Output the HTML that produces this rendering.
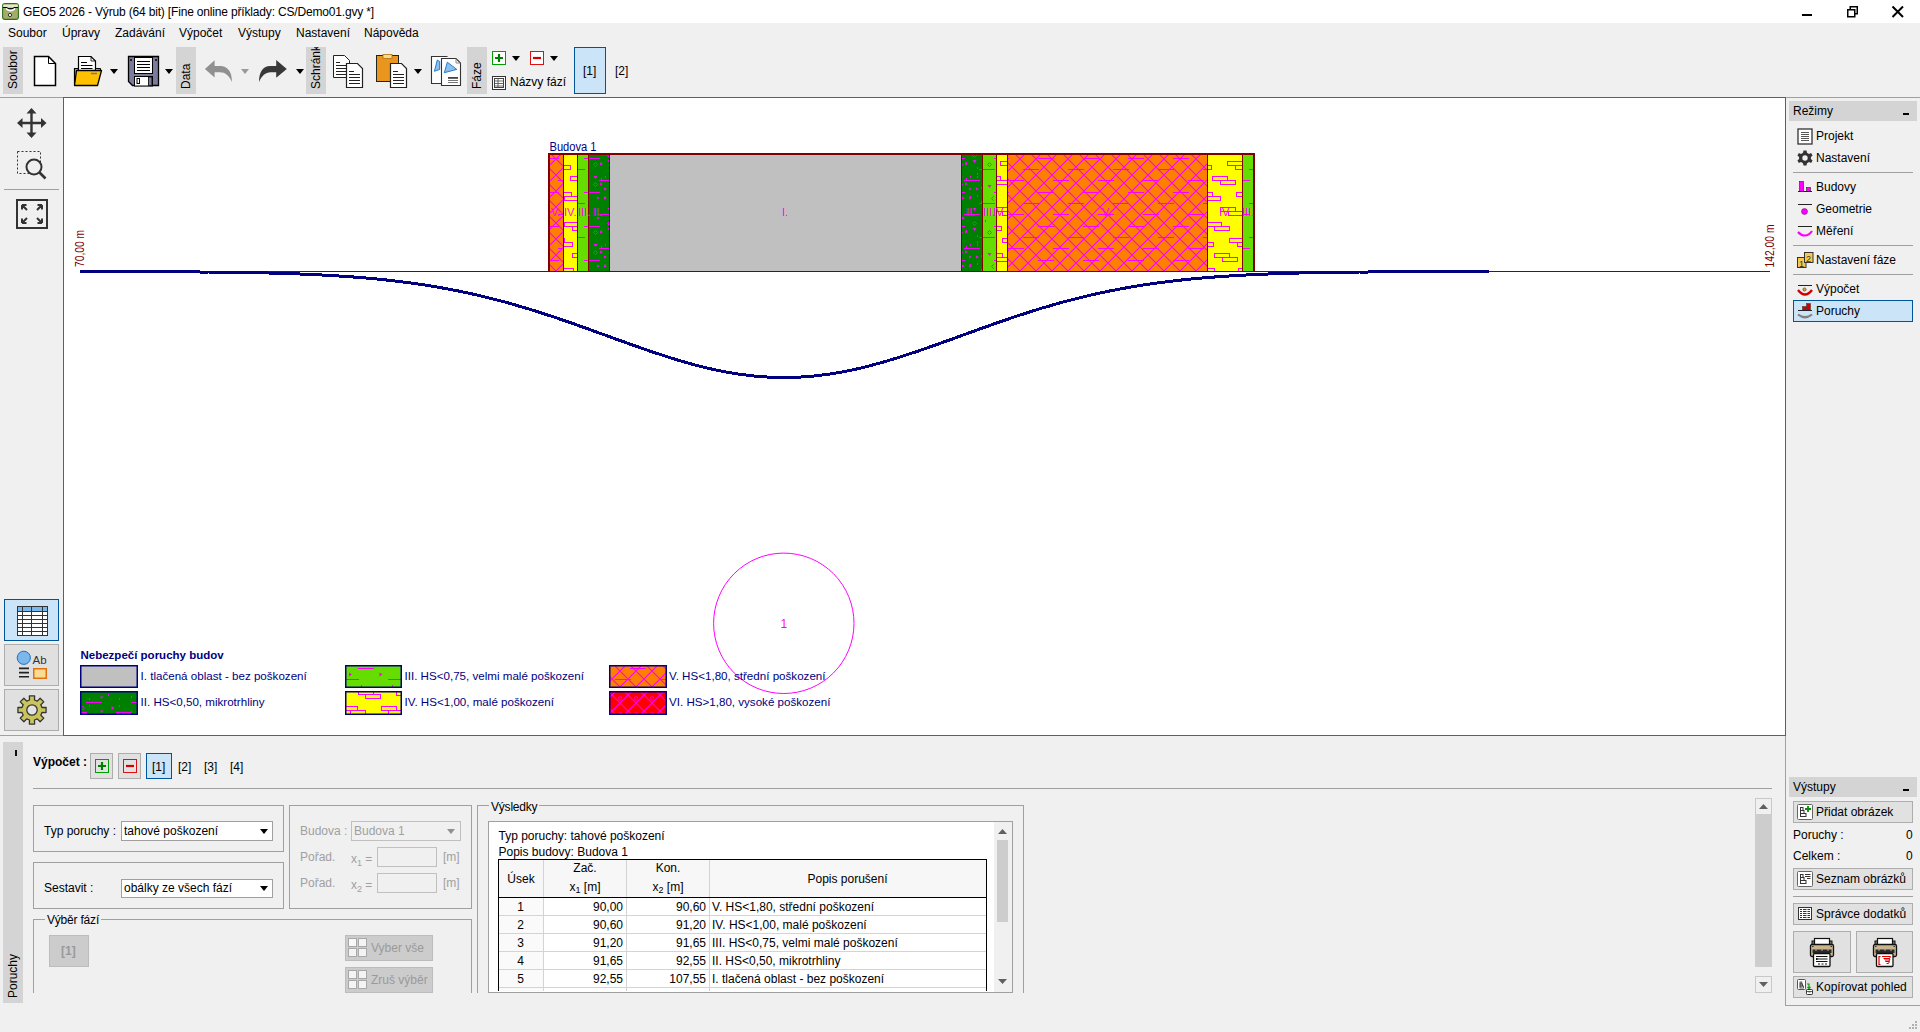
<!DOCTYPE html>
<html><head><meta charset="utf-8">
<style>
*{margin:0;padding:0;box-sizing:border-box}
html,body{width:1920px;height:1032px;overflow:hidden;background:#f0f0f0;font-family:"Liberation Sans",sans-serif;font-size:12px;color:#000}
.a{position:absolute}
.t{position:absolute;white-space:nowrap;line-height:12px;font-size:12px}
.tab{position:absolute;background:#d4d4d4}
.vt{position:absolute;white-space:nowrap;font-size:12px;line-height:12px;transform-origin:0 0;transform:rotate(-90deg)}
.hdr{position:absolute;background:#d4d4d4}
.btn{position:absolute;background:#e1e1e1;border:1px solid #adadad}
.sel{position:absolute;background:#cce4f7;border:1px solid #005499}
.sep{position:absolute;background:#a0a0a0;height:1px}
.grp{position:absolute;border:1px solid #a0a0a0}
</style></head><body>
<!-- title bar -->
<div class="a" style="left:0;top:0;width:1920px;height:23px;background:#fff"></div>
<svg class="a" style="left:2px;top:3px" width="17" height="17" viewBox="0 0 17 17"><rect x="0.6" y="0.6" width="15.8" height="15.8" rx="2.5" fill="#a4ac6a" stroke="#2f7020" stroke-width="1.1"/><path d="M1.2 1.5 H15.8 V4.5 H1.2 Z" fill="#e4e8d0"/><path d="M4 5.5 Q8.5 10 13 5.5" fill="none" stroke="#fff" stroke-width="1.6"/><path d="M1 4.5 H5 Q5.8 5.6 7 5.6 H10 Q11.2 5.6 12 4.5 H16" fill="none" stroke="#000" stroke-width="1"/><circle cx="8" cy="12" r="1.6" fill="#fff" stroke="#222" stroke-width="0.9"/></svg>
<div class="t" style="left:23px;top:6px;letter-spacing:-0.17px">GEO5 2026 - Výrub (64 bit) [Fine online příklady: CS/Demo01.gvy *]</div>
<!-- window controls -->
<div class="a" style="left:1802px;top:14px;width:10px;height:2px;background:#000"></div>
<svg class="a" style="left:1846px;top:5px" width="13" height="13" viewBox="0 0 13 13"><rect x="1.75" y="4.75" width="7" height="7" fill="none" stroke="#000" stroke-width="1.5"/><path d="M4.25 4.5 V1.75 H11.25 V8.75 H9" fill="none" stroke="#000" stroke-width="1.5"/></svg>
<svg class="a" style="left:1891px;top:5px" width="14" height="14" viewBox="0 0 14 14"><path d="M1.5 1.5 L12 12 M12 1.5 L1.5 12" stroke="#000" stroke-width="2"/></svg>
<!-- menu -->
<div class="t" style="left:8px;top:27px">Soubor</div>
<div class="t" style="left:62px;top:27px">Úpravy</div>
<div class="t" style="left:115px;top:27px">Zadávání</div>
<div class="t" style="left:179px;top:27px">Výpočet</div>
<div class="t" style="left:238px;top:27px">Výstupy</div>
<div class="t" style="left:296px;top:27px">Nastavení</div>
<div class="t" style="left:364px;top:27px">Nápověda</div>
<!-- toolbar tabs -->
<div class="tab" style="left:3px;top:47px;width:20px;height:47px"></div>
<div class="vt" style="left:7px;top:89px">Soubor</div>
<div class="tab" style="left:176px;top:47px;width:20px;height:47px"></div>
<div class="vt" style="left:180px;top:89px">Data</div>
<div class="tab" style="left:306px;top:47px;width:20px;height:47px;overflow:hidden"></div>
<div class="a" style="left:306px;top:47px;width:20px;height:47px;overflow:hidden"><div class="vt" style="left:4px;top:42px">Schránka</div></div>
<div class="tab" style="left:467px;top:47px;width:20px;height:47px"></div>
<div class="vt" style="left:471px;top:89px">Fáze</div>
<!-- new -->
<svg class="a" style="left:33px;top:55px" width="26" height="33" viewBox="0 0 26 33"><path d="M1.5 1.5 H15.5 L22.5 8.5 V30.5 H1.5 Z" fill="#fff" stroke="#000" stroke-width="1.5"/><path d="M15.5 1.5 V8.5 H22.5" fill="none" stroke="#000" stroke-width="1"/></svg>
<!-- open -->
<svg class="a" style="left:73px;top:55px" width="30" height="33" viewBox="0 0 30 33"><path d="M1.5 13.5 H6.5 V29 H1.5 Z" fill="#e0a000" stroke="#000" stroke-width="1.2"/><path d="M5.5 1.5 H18 L22.5 6 V19 H5.5 Z" fill="#fff" stroke="#000" stroke-width="1.2"/><path d="M18 1.5 V6 H22.5" fill="none" stroke="#000" stroke-width=".8"/><path d="M8 7.5 H14 M8 10.5 H19.5 M8 13.5 H19.5" stroke="#000" stroke-width="1"/><path d="M22 13.5 H27.5 V16" fill="#e0a000" stroke="#000" stroke-width="1"/><path d="M3.5 15.5 H28.5 L24.5 30.5 H1.5 Z" fill="#ffc000" stroke="#000" stroke-width="1.3" stroke-linejoin="round"/><path d="M18 18.5 H24" stroke="#6a78a8" stroke-width="1.5"/></svg>
<svg class="a" style="left:110px;top:69px" width="8" height="5"><path d="M0 0 H8 L4 5 Z" fill="#000"/></svg>
<!-- save -->
<svg class="a" style="left:127px;top:55px" width="33" height="33" viewBox="0 0 33 33"><path d="M1.5 1.5 H31.5 V30.5 H5.5 L1.5 26.5 Z" fill="#7b7b9b" stroke="#000" stroke-width="1.3"/><rect x="3" y="4" width="2" height="2" fill="#222"/><rect x="28" y="4" width="2" height="2" fill="#222"/><rect x="7.5" y="2.5" width="18" height="16" fill="#fff" stroke="#000" stroke-width="1"/><path d="M10 6.5 H23 M10 9.5 H23 M10 12.5 H23 M10 15.5 H23" stroke="#000" stroke-width="1"/><rect x="7.5" y="21.5" width="18" height="9.5" fill="#fff" stroke="#000" stroke-width="1"/><rect x="10" y="23.5" width="2.5" height="5" fill="none" stroke="#000" stroke-width="1"/><rect x="21.5" y="22" width="3.5" height="8.5" fill="#7b7b9b" stroke="#000" stroke-width=".8"/></svg>
<svg class="a" style="left:165px;top:69px" width="8" height="5"><path d="M0 0 H8 L4 5 Z" fill="#000"/></svg>
<!-- undo -->
<svg class="a" style="left:204px;top:58px" width="30" height="26" viewBox="204 58 30 26"><path d="M204.9 68.9 L214.6 60.3 V66 H220.5 C227 66 232 71 232 82 C229 75.5 225 72.3 220 72.3 H214.6 V77.5 Z" fill="#909090"/></svg>
<svg class="a" style="left:241px;top:69px" width="8" height="5"><path d="M0 0 H8 L4 5 Z" fill="#9a9a9a"/></svg>
<!-- redo -->
<svg class="a" style="left:258px;top:58px" width="30" height="26" viewBox="258 58 30 26"><path d="M286.8 69 L276.2 60 V66 H270 C263.5 66 259 71.5 259 82 C261.8 75.8 265.5 72.3 270.5 72.3 H276.2 V77.8 Z" fill="#383838"/></svg>
<svg class="a" style="left:296px;top:69px" width="8" height="5"><path d="M0 0 H8 L4 5 Z" fill="#000"/></svg>
<!-- copy -->
<svg class="a" style="left:332px;top:54px" width="33" height="35" viewBox="0 0 33 35"><path d="M1.5 1.5 H12.5 L17.5 6.5 V23.5 H1.5 Z" fill="#fff" stroke="#222" stroke-width="1"/><path d="M4 8.5 H8 M4 11.5 H14 M4 14.5 H14 M4 17.5 H14 M4 20.5 H14" stroke="#222"/><path d="M14.5 9.5 H25.5 L30.5 14.5 V33.5 H14.5 Z" fill="#fff" stroke="#222" stroke-width="1.2"/><path d="M17 17.5 H22 M17 20.5 H28 M17 23.5 H28 M17 26.5 H28 M17 29.5 H28" stroke="#222"/></svg>
<!-- paste -->
<svg class="a" style="left:375px;top:54px" width="34" height="35" viewBox="0 0 34 35"><rect x="1.5" y="1.5" width="22" height="26" fill="#e8961e" stroke="#222"/><rect x="8" y="0.5" width="9" height="4" fill="#f8d890" stroke="#b07010" stroke-width=".8"/><path d="M15.5 9.5 H26.5 L31.5 14.5 V33.5 H15.5 Z" fill="#fff" stroke="#222" stroke-width="1.2"/><path d="M18 17.5 H23 M18 20.5 H29 M18 23.5 H29 M18 26.5 H29 M18 29.5 H29" stroke="#222"/></svg>
<svg class="a" style="left:414px;top:69px" width="8" height="5"><path d="M0 0 H8 L4 5 Z" fill="#000"/></svg>
<!-- report icon -->
<svg class="a" style="left:430px;top:55px" width="33" height="33" viewBox="0 0 33 33"><path d="M1.5 1.5 H17.5 V28.5 H1.5 Z" fill="#fff"/><path d="M17.5 1.5 H1.5 V28.5 H11" fill="none" stroke="#333" stroke-width="1.1"/><path d="M7.3 5 L4.4 16.3 L9.7 14.5 V6.5 Z" fill="#8ac0ee" stroke="#1a70c8" stroke-width=".9"/><path d="M11.5 3.5 H26 L30.5 8 V30.5 H11.5 Z" fill="#fff" stroke="#333" stroke-width="1.1"/><path d="M26 3.5 V8 H30.5" fill="none" stroke="#888" stroke-width="1"/><path d="M17.3 7.2 L14.3 17.7 L26.8 14.4 Z" fill="#8ac0ee" stroke="#1a70c8" stroke-width=".9"/><path d="M18 22.9 H28" stroke="#444" stroke-width="1.8"/><path d="M18 25.5 H28 M18 27.5 H28" stroke="#555" stroke-width=".8"/></svg>
<!-- phase + - -->
<svg class="a" style="left:492px;top:51px" width="14" height="14" viewBox="0 0 14 14"><rect x="0.5" y="0.5" width="13" height="13" fill="#fff" stroke="#00a000"/><path d="M7 3 V11 M3 7 H11" stroke="#008000" stroke-width="2.2"/></svg>
<svg class="a" style="left:512px;top:56px" width="8" height="5"><path d="M0 0 H8 L4 5 Z" fill="#000"/></svg>
<svg class="a" style="left:530px;top:51px" width="14" height="14" viewBox="0 0 14 14"><rect x="0.5" y="0.5" width="13" height="13" fill="#fff" stroke="#e01010"/><path d="M3 7 H11" stroke="#d00000" stroke-width="2.2"/></svg>
<svg class="a" style="left:550px;top:56px" width="8" height="5"><path d="M0 0 H8 L4 5 Z" fill="#000"/></svg>
<svg class="a" style="left:492px;top:76px" width="14" height="14" viewBox="0 0 14 14"><rect x="0.5" y="0.5" width="13" height="13" fill="#fff" stroke="#333"/><rect x="2.5" y="2.5" width="9" height="9" fill="none" stroke="#444"/><path d="M2.5 5 H11.5 M2.5 7.5 H11.5 M2.5 10 H11.5 M6 2.5 V11.5" stroke="#444" stroke-width=".8"/></svg>
<div class="t" style="left:510px;top:76px">Názvy fází</div>
<div class="sel" style="left:574px;top:47px;width:32px;height:47px"></div>
<div class="t" style="left:583px;top:65px">[1]</div>
<div class="t" style="left:615px;top:65px">[2]</div>
<!-- CANVAS -->
<div class="a" style="left:63px;top:97px;width:1723px;height:639px;border:1px solid #0078d7;background:#fff"></div>
<div class="a" style="left:0;top:97px;width:63px;height:1px;background:#a0a0a0"></div>
<div class="a" style="left:1786px;top:97px;width:134px;height:1px;background:#a0a0a0"></div>
<div class="a" style="left:0;top:735px;width:63px;height:1px;background:#a0a0a0"></div>
<div class="a" style="left:1785px;top:736px;width:1px;height:270px;background:#a0a0a0"></div>
<div class="a" style="left:1785px;top:1005px;width:135px;height:1px;background:#a0a0a0"></div>
<!-- CANVAS SVG -->
<svg class="a" style="left:64px;top:98px" width="1721" height="637" viewBox="64 98 1721 637">
<defs>
<pattern id="pV" width="16" height="16" patternUnits="userSpaceOnUse" x="4" y="7"><rect width="16" height="16" fill="#ff8000"/><path d="M0 0 L16 16 M16 0 L0 16" stroke="#ff00ff" stroke-width="1.1"/></pattern>
<pattern id="pVd" width="45" height="34" patternUnits="userSpaceOnUse" x="3" y="22"><path d="M0 0.5 H16 M30 11.5 H46 M-15 11.5 H1 M15 22.5 H31" stroke="#ff00ff" stroke-width="1"/></pattern>
<pattern id="pDl" width="45" height="34" patternUnits="userSpaceOnUse" x="44" y="22"><path d="M0 0.5 H16 M30 11.5 H46 M-15 11.5 H1 M15 22.5 H31" stroke="#ff00ff" stroke-width="1"/></pattern>
<pattern id="pDr" width="45" height="34" patternUnits="userSpaceOnUse" x="4" y="22"><path d="M0 0.5 H16 M30 11.5 H46 M-15 11.5 H1 M15 22.5 H31" stroke="#ff00ff" stroke-width="1"/></pattern>
<g id="marks"><rect x="17" y="4" width="1" height="2" fill="#ff00ff"/><rect x="28" y="9" width="1" height="2" fill="#ff00ff"/><rect x="28" y="15" width="1" height="2" fill="#ff00ff"/><rect x="21" y="18" width="1" height="2" fill="#ff00ff"/><rect x="21" y="38" width="1" height="2" fill="#ff00ff"/><rect x="32" y="29" width="1" height="2" fill="#ff00ff"/><rect x="32" y="43" width="1" height="2" fill="#ff00ff"/><rect x="17" y="20" width="1" height="2" fill="#ff00ff"/><rect x="28" y="37" width="1" height="2" fill="#ff00ff"/><rect x="36" y="62" width="1" height="2" fill="#ff00ff"/><rect x="28" y="18" width="1" height="2" fill="#ff00ff"/><path d="M20 29.5 L23 31 L20 32.5 Z" fill="#ff00ff"/><path d="M13 38.5 L16 40 L13 41.5 Z" fill="#ff00ff"/><path d="M13 58.5 L16 60 L13 61.5 Z" fill="#ff00ff"/><path d="M16 4.5 L19 6 L16 7.5 Z" fill="#ff00ff"/><path d="M16 24.5 L19 26 L16 27.5 Z" fill="#ff00ff"/><path d="M27 29.5 L30 31 L27 32.5 Z" fill="#ff00ff"/><path d="M20 38.5 L23 40 L20 41.5 Z" fill="#ff00ff"/><path d="M23.5 50 H27.5 L25.5 53 Z" fill="#ff00ff"/><path d="M23.5 2 H27.5 L25.5 5 Z" fill="#ff00ff"/><path d="M38.5 27 H42.5 L40.5 30 Z" fill="#ff00ff"/><path d="M9.5 18 H13.5 L11.5 21 Z" fill="#ff00ff"/><path d="M25.5 63.5 L27.5 65.5 L25.5 67.5 L23.5 65.5 Z" fill="none" stroke="#ff00ff" stroke-width="1"/><path d="M40.5 4.5 L42.5 6.5 L40.5 8.5 L38.5 6.5 Z" fill="none" stroke="#ff00ff" stroke-width="1"/><path d="M44.5 38.5 L46.5 40.5 L44.5 42.5 L42.5 40.5 Z" fill="none" stroke="#ff00ff" stroke-width="1"/><path d="M11.5 4.5 L13.5 6.5 L11.5 8.5 L9.5 6.5 Z" fill="none" stroke="#ff00ff" stroke-width="1"/><path d="M11.5 24.5 L13.5 26.5 L11.5 28.5 L9.5 26.5 Z" fill="none" stroke="#ff00ff" stroke-width="1"/></g>
<pattern id="pMl" width="45" height="68" patternUnits="userSpaceOnUse" x="44" y="22"><use href="#marks"/></pattern>
<pattern id="pMr" width="45" height="68" patternUnits="userSpaceOnUse" x="4" y="22"><use href="#marks"/></pattern>
<pattern id="pVI" width="16" height="16" patternUnits="userSpaceOnUse" x="4" y="7"><rect width="16" height="16" fill="#ff0000"/><path d="M0 0 L16 16 M16 0 L0 16" stroke="#ff00ff" stroke-width="1.1"/><circle cx="8" cy="3.5" r="1.8" fill="none" stroke="#ff00ff" stroke-width=".9"/></pattern>
<pattern id="pIV" width="38.5" height="32" patternUnits="userSpaceOnUse" x="12" y="3"><g fill="none" stroke="#ff00ff" stroke-width="1"><path d="M0.5 0.5 h15 v4 h-15 z M8.5 4.5 h15 v4 h-15 z M24.5 16.5 h15 v4 h-15 z M-14 16.5 h15 v4 h-15 z M32.5 20.5 h15 v4 h-15 z M-6 20.5 h15 v4 h-15 z"/></g></pattern>
<pattern id="pIII" width="45" height="34" patternUnits="userSpaceOnUse" x="1" y="3"><path d="M0 0.5 H16 M30 11.5 H46 M-15 11.5 H1 M15 22.5 H31" stroke="#ff00ff" stroke-width="1"/><path d="M3 5 L6 6.5 L3 8 Z M34 5 L37 6.5 L34 8 Z" fill="#ff00ff"/></pattern>
<pattern id="pII" width="45" height="34" patternUnits="userSpaceOnUse" x="6" y="11"><path d="M0 0.5 H16 M30 11.5 H46 M-15 11.5 H1 M15 22.5 H31" stroke="#ff00ff" stroke-width="1"/><path d="M19 -5 L22 -5 L20.5 -3 Z M19 9 L22 9 L20.5 11 Z M27 3 L30 4.5 L27 6 Z" fill="#ff00ff"/><path d="M4 -4 V-2 M4 3 V5 M27 -7 V-5 M38 -4 V-2 M38 3 V5" stroke="#ff00ff"/></pattern>
</defs>
<g shape-rendering="crispEdges">
<rect x="80" y="271" width="1690" height="1" fill="#800000"/>
<!-- building -->
<rect x="548" y="153" width="707" height="119" fill="#800000"/>
<rect x="550" y="155" width="13" height="116" fill="url(#pV)"/><rect x="550" y="155" width="13" height="116" fill="url(#pVd)"/>
<svg x="564" y="155" width="13" height="116" viewBox="564 155 13 116"><rect x="564" y="155" width="13" height="116" fill="#ffff00"/><path d="M538.5 130.5 h15 v4 h-15 z M546.5 134.5 h15 v4 h-15 z M577.5 130.5 h15 v4 h-15 z M585.5 134.5 h15 v4 h-15 z M562.5 146.5 h15 v4 h-15 z M570.5 150.5 h15 v4 h-15 z M547.5 161.5 h15 v4 h-15 z M555.5 165.5 h15 v4 h-15 z M570.5 176.5 h15 v4 h-15 z M578.5 180.5 h15 v4 h-15 z M556.5 192.5 h15 v4 h-15 z M564.5 196.5 h15 v4 h-15 z M540.5 207.5 h15 v4 h-15 z M548.5 211.5 h15 v4 h-15 z M579.5 207.5 h15 v4 h-15 z M587.5 211.5 h15 v4 h-15 z M564.5 222.5 h15 v4 h-15 z M572.5 226.5 h15 v4 h-15 z M549.5 238.5 h15 v4 h-15 z M557.5 242.5 h15 v4 h-15 z M572.5 253.5 h15 v4 h-15 z M580.5 257.5 h15 v4 h-15 z M558.5 268.5 h15 v4 h-15 z M566.5 272.5 h15 v4 h-15 z M542.5 284.5 h15 v4 h-15 z M550.5 288.5 h15 v4 h-15 z" fill="none" stroke="#ff00ff" stroke-width="1"/></svg>
<rect x="578" y="155" width="10" height="116" fill="#66dd00"/><rect x="578" y="155" width="10" height="116" fill="url(#pDl)"/>
<rect x="589" y="155" width="20" height="116" fill="#008000"/><rect x="589" y="155" width="20" height="116" fill="url(#pDl)"/><rect x="589" y="155" width="20" height="116" fill="url(#pMl)"/>
<rect x="610" y="155" width="351" height="116" fill="#c0c0c0"/>
<rect x="962" y="155" width="20" height="116" fill="#008000"/><rect x="962" y="155" width="20" height="116" fill="url(#pDr)"/><rect x="962" y="155" width="20" height="116" fill="url(#pMr)"/>
<rect x="983" y="155" width="13" height="116" fill="#66dd00"/><rect x="983" y="155" width="13" height="116" fill="url(#pDr)"/><rect x="983" y="155" width="13" height="116" fill="url(#pMr)"/>
<svg x="997" y="155" width="10" height="116" viewBox="997 155 10 116"><rect x="997" y="155" width="10" height="116" fill="#ffff00"/><path d="M992.5 130.5 h15 v4 h-15 z M1000.5 134.5 h15 v4 h-15 z M976.5 146.5 h15 v4 h-15 z M984.5 150.5 h15 v4 h-15 z M1000.5 161.5 h15 v4 h-15 z M1008.5 165.5 h15 v4 h-15 z M985.5 176.5 h15 v4 h-15 z M993.5 180.5 h15 v4 h-15 z M1008.5 192.5 h15 v4 h-15 z M1016.5 196.5 h15 v4 h-15 z M994.5 207.5 h15 v4 h-15 z M1002.5 211.5 h15 v4 h-15 z M978.5 222.5 h15 v4 h-15 z M986.5 226.5 h15 v4 h-15 z M1002.5 238.5 h15 v4 h-15 z M1010.5 242.5 h15 v4 h-15 z M987.5 253.5 h15 v4 h-15 z M995.5 257.5 h15 v4 h-15 z M972.5 268.5 h15 v4 h-15 z M980.5 272.5 h15 v4 h-15 z M1010.5 268.5 h15 v4 h-15 z M1018.5 272.5 h15 v4 h-15 z M996.5 284.5 h15 v4 h-15 z M1004.5 288.5 h15 v4 h-15 z" fill="none" stroke="#ff00ff" stroke-width="1"/></svg>
<rect x="1008" y="155" width="199" height="116" fill="url(#pV)"/><rect x="1008" y="155" width="199" height="116" fill="url(#pVd)"/>
<svg x="1208" y="155" width="34" height="116" viewBox="1208 155 34 116"><rect x="1208" y="155" width="34" height="116" fill="#ffff00"/><path d="M1218.5 130.5 h15 v4 h-15 z M1226.5 134.5 h15 v4 h-15 z M1204.5 146.5 h15 v4 h-15 z M1212.5 150.5 h15 v4 h-15 z M1242.5 146.5 h15 v4 h-15 z M1250.5 150.5 h15 v4 h-15 z M1188.5 161.5 h15 v4 h-15 z M1196.5 165.5 h15 v4 h-15 z M1227.5 161.5 h15 v4 h-15 z M1235.5 165.5 h15 v4 h-15 z M1212.5 176.5 h15 v4 h-15 z M1220.5 180.5 h15 v4 h-15 z M1197.5 192.5 h15 v4 h-15 z M1205.5 196.5 h15 v4 h-15 z M1236.5 192.5 h15 v4 h-15 z M1244.5 196.5 h15 v4 h-15 z M1182.5 207.5 h15 v4 h-15 z M1190.5 211.5 h15 v4 h-15 z M1220.5 207.5 h15 v4 h-15 z M1228.5 211.5 h15 v4 h-15 z M1206.5 222.5 h15 v4 h-15 z M1214.5 226.5 h15 v4 h-15 z M1244.5 222.5 h15 v4 h-15 z M1252.5 226.5 h15 v4 h-15 z M1190.5 238.5 h15 v4 h-15 z M1198.5 242.5 h15 v4 h-15 z M1229.5 238.5 h15 v4 h-15 z M1237.5 242.5 h15 v4 h-15 z M1214.5 253.5 h15 v4 h-15 z M1222.5 257.5 h15 v4 h-15 z M1199.5 268.5 h15 v4 h-15 z M1207.5 272.5 h15 v4 h-15 z M1238.5 268.5 h15 v4 h-15 z M1246.5 272.5 h15 v4 h-15 z M1184.5 284.5 h15 v4 h-15 z M1192.5 288.5 h15 v4 h-15 z M1222.5 284.5 h15 v4 h-15 z M1230.5 288.5 h15 v4 h-15 z" fill="none" stroke="#ff00ff" stroke-width="1"/></svg>
<rect x="1243" y="155" width="10" height="116" fill="#66dd00"/><rect x="1243" y="155" width="10" height="116" fill="url(#pDr)"/>
</g>
<g font-family="Liberation Sans" font-size="11" fill="#ff00ff">
<text x="551" y="215.5">V.</text><text x="564" y="215.5">IV.</text><text x="578" y="215.5">III.</text><text x="593" y="215.5">II.</text>
<text x="782" y="215.5">I.</text>
<text x="966" y="215.5">II.</text><text x="983" y="215.5">III.</text><text x="993" y="215.5">IV.</text>
<text x="1102" y="215.5">V.</text><text x="1219" y="215.5">IV.</text><text x="1242" y="215.5">III.</text>
</g>
<text x="549.5" y="151" font-family="Liberation Sans" font-size="12" fill="#000080" textLength="47" lengthAdjust="spacingAndGlyphs">Budova 1</text>
<text transform="translate(84,267) rotate(-90)" font-family="Liberation Sans" font-size="12" fill="#800000" textLength="37" lengthAdjust="spacingAndGlyphs">70,00 m</text>
<text transform="translate(1773.5,267.5) rotate(-90)" font-family="Liberation Sans" font-size="12" fill="#800000" textLength="43" lengthAdjust="spacingAndGlyphs">142,00 m</text>
<path d="M80,271.5 L84,271.5 L88,271.5 L92,271.6 L96,271.6 L100,271.6 L104,271.6 L108,271.6 L112,271.6 L116,271.6 L120,271.6 L124,271.6 L128,271.6 L132,271.6 L136,271.6 L140,271.6 L144,271.7 L148,271.7 L152,271.7 L156,271.7 L160,271.7 L164,271.7 L168,271.7 L172,271.8 L176,271.8 L180,271.8 L184,271.8 L188,271.9 L192,271.9 L196,271.9 L200,272.0 L204,272.0 L208,272.0 L212,272.1 L216,272.1 L220,272.2 L224,272.2 L228,272.3 L232,272.3 L236,272.4 L240,272.4 L244,272.5 L248,272.6 L252,272.7 L256,272.7 L260,272.8 L264,272.9 L268,273.0 L272,273.1 L276,273.2 L280,273.3 L284,273.5 L288,273.6 L292,273.7 L296,273.9 L300,274.0 L304,274.2 L308,274.4 L312,274.5 L316,274.7 L320,274.9 L324,275.1 L328,275.3 L332,275.6 L336,275.8 L340,276.1 L344,276.3 L348,276.6 L352,276.9 L356,277.2 L360,277.5 L364,277.8 L368,278.2 L372,278.6 L376,278.9 L380,279.3 L384,279.7 L388,280.2 L392,280.6 L396,281.1 L400,281.6 L404,282.1 L408,282.6 L412,283.1 L416,283.7 L420,284.3 L424,284.9 L428,285.5 L432,286.2 L436,286.8 L440,287.5 L444,288.3 L448,289.0 L452,289.8 L456,290.5 L460,291.3 L464,292.2 L468,293.0 L472,293.9 L476,294.8 L480,295.8 L484,296.7 L488,297.7 L492,298.7 L496,299.7 L500,300.8 L504,301.8 L508,302.9 L512,304.0 L516,305.2 L520,306.4 L524,307.5 L528,308.7 L532,310.0 L536,311.2 L540,312.5 L544,313.8 L548,315.1 L552,316.4 L556,317.7 L560,319.1 L564,320.5 L568,321.8 L572,323.2 L576,324.6 L580,326.1 L584,327.5 L588,328.9 L592,330.4 L596,331.8 L600,333.3 L604,334.7 L608,336.2 L612,337.6 L616,339.1 L620,340.5 L624,341.9 L628,343.4 L632,344.8 L636,346.2 L640,347.6 L644,349.0 L648,350.4 L652,351.8 L656,353.1 L660,354.4 L664,355.7 L668,357.0 L672,358.3 L676,359.5 L680,360.7 L684,361.9 L688,363.0 L692,364.1 L696,365.2 L700,366.2 L704,367.2 L708,368.2 L712,369.1 L716,370.0 L720,370.8 L724,371.6 L728,372.3 L732,373.0 L736,373.7 L740,374.3 L744,374.8 L748,375.3 L752,375.8 L756,376.2 L760,376.5 L764,376.8 L768,377.1 L772,377.3 L776,377.4 L780,377.5 L784,377.5 L788,377.5 L792,377.4 L796,377.3 L800,377.1 L804,376.8 L808,376.5 L812,376.2 L816,375.8 L820,375.3 L824,374.8 L828,374.3 L832,373.7 L836,373.0 L840,372.3 L844,371.6 L848,370.8 L852,370.0 L856,369.1 L860,368.2 L864,367.2 L868,366.2 L872,365.2 L876,364.1 L880,363.0 L884,361.9 L888,360.7 L892,359.5 L896,358.3 L900,357.0 L904,355.7 L908,354.4 L912,353.1 L916,351.8 L920,350.4 L924,349.0 L928,347.6 L932,346.2 L936,344.8 L940,343.4 L944,341.9 L948,340.5 L952,339.1 L956,337.6 L960,336.2 L964,334.7 L968,333.3 L972,331.8 L976,330.4 L980,328.9 L984,327.5 L988,326.1 L992,324.6 L996,323.2 L1000,321.8 L1004,320.5 L1008,319.1 L1012,317.7 L1016,316.4 L1020,315.1 L1024,313.8 L1028,312.5 L1032,311.2 L1036,310.0 L1040,308.7 L1044,307.5 L1048,306.4 L1052,305.2 L1056,304.0 L1060,302.9 L1064,301.8 L1068,300.8 L1072,299.7 L1076,298.7 L1080,297.7 L1084,296.7 L1088,295.8 L1092,294.8 L1096,293.9 L1100,293.0 L1104,292.2 L1108,291.3 L1112,290.5 L1116,289.8 L1120,289.0 L1124,288.3 L1128,287.5 L1132,286.8 L1136,286.2 L1140,285.5 L1144,284.9 L1148,284.3 L1152,283.7 L1156,283.1 L1160,282.6 L1164,282.1 L1168,281.6 L1172,281.1 L1176,280.6 L1180,280.2 L1184,279.7 L1188,279.3 L1192,278.9 L1196,278.6 L1200,278.2 L1204,277.8 L1208,277.5 L1212,277.2 L1216,276.9 L1220,276.6 L1224,276.3 L1228,276.1 L1232,275.8 L1236,275.6 L1240,275.3 L1244,275.1 L1248,274.9 L1252,274.7 L1256,274.5 L1260,274.4 L1264,274.2 L1268,274.0 L1272,273.9 L1276,273.7 L1280,273.6 L1284,273.5 L1288,273.3 L1292,273.2 L1296,273.1 L1300,273.0 L1304,272.9 L1308,272.8 L1312,272.7 L1316,272.7 L1320,272.6 L1324,272.5 L1328,272.4 L1332,272.4 L1336,272.3 L1340,272.3 L1344,272.2 L1348,272.2 L1352,272.1 L1356,272.1 L1360,272.0 L1364,272.0 L1368,272.0 L1372,271.9 L1376,271.9 L1380,271.9 L1384,271.8 L1388,271.8 L1392,271.8 L1396,271.8 L1400,271.7 L1404,271.7 L1408,271.7 L1412,271.7 L1416,271.7 L1420,271.7 L1424,271.7 L1428,271.6 L1432,271.6 L1436,271.6 L1440,271.6 L1444,271.6 L1448,271.6 L1452,271.6 L1456,271.6 L1460,271.6 L1464,271.6 L1468,271.6 L1472,271.6 L1476,271.6 L1480,271.5 L1484,271.5 L1488,271.5 L1489,271.5" fill="none" stroke="#000080" stroke-width="3" stroke-linejoin="round" shape-rendering="crispEdges"/>
<circle cx="783.8" cy="623.3" r="70.2" fill="none" stroke="#ff00ff" stroke-width="1"/>
<text x="780.5" y="627.5" font-family="Liberation Sans" font-size="12" fill="#ff00ff">1</text>
<!-- legend -->
<text x="80.5" y="659" font-family="Liberation Sans" font-size="11.5" font-weight="bold" fill="#000080">Nebezpečí poruchy budov</text>
<g shape-rendering="crispEdges">
<rect x="81" y="666" width="56" height="21" fill="#c0c0c0"/>
<rect x="81" y="692" width="56" height="22" fill="#008000"/>
<path d="M86 702.5 H102 M131 702.5 H137 M81 712.5 H87 M116 712.5 H132 M89.5 698 V700 M89.5 705 V707 M108.5 694 V696 M119.5 698 V700 M119.5 705 V707 M131.5 696 V698 M131.5 711 V713" stroke="#ff00ff" stroke-width="1"/>
<rect x="346" y="666" width="55" height="21" fill="#66dd00"/>
<path d="M358 668.5 H374 M346 679.5 H359 M388 679.5 H401 M361.5 685 V687 M392.5 685 V687" stroke="#ff00ff" stroke-width="1"/>
<rect x="346" y="692" width="55" height="22" fill="#ffff00"/>
<path d="M358.5 691.5 h15 v3 h-15 z M365.5 694.5 h15 v4 h-15 z M396.5 691.5 h5 v4 h-5 z M345.5 706.5 h12 v3.5 h-12 z M350.5 710 h15 v4 h-15 z M381.5 706.5 h15 v3.5 h-15 z M388.5 710 h13 v4 h-13 z" fill="none" stroke="#ff00ff" stroke-width="1"/>
<rect x="610" y="666" width="56" height="21" fill="url(#pV)"/>
<path d="M630 668.5 H646 M615 679.5 H631 M660 679.5 H666" stroke="#ff00ff" stroke-width="1"/>
<rect x="610" y="692" width="56" height="22" fill="url(#pVI)"/>
</g>
<g fill="#ff00ff">
<path d="M100 696.5 H103.5 L101.75 699 Z M100 710.5 H103.5 L101.75 713 Z M111.5 706 L114.5 708 L111.5 710 Z"/>
<path d="M349 672.5 L352 674.5 L349 676.5 Z M379.5 672.5 L382.5 674.5 L379.5 676.5 Z"/>
</g>
<path d="M82.5 706 L84.5 708 L82.5 710 L80.5 708 Z" fill="none" stroke="#ff00ff" stroke-width=".9"/>
<g fill="none" stroke="#000080" stroke-width="1.5">
<rect x="80.75" y="665.75" width="56.5" height="21.5"/><rect x="80.75" y="691.75" width="56.5" height="22.5"/>
<rect x="345.75" y="665.75" width="55.5" height="21.5"/><rect x="345.75" y="691.75" width="55.5" height="22.5"/>
<rect x="609.75" y="665.75" width="56.5" height="21.5"/><rect x="609.75" y="691.75" width="56.5" height="22.5"/>
</g>
<g font-family="Liberation Sans" font-size="11.6" fill="#000080">
<text x="140.5" y="680">I. tlačená oblast - bez poškození</text>
<text x="140.5" y="706">II. HS&lt;0,50, mikrotrhliny</text>
<text x="404.5" y="680">III. HS&lt;0,75, velmi malé poškození</text>
<text x="404.5" y="706">IV. HS&lt;1,00, malé poškození</text>
<text x="669" y="680">V. HS&lt;1,80, střední poškození</text>
<text x="669" y="706">VI. HS&gt;1,80, vysoké poškození</text>
</g>
</svg>
<!-- LEFT TOOLBAR -->
<svg class="a" style="left:16px;top:107px" width="32" height="32" viewBox="0 0 32 32"><path d="M15.5 6 V26 M6 16 H25" stroke="#333" stroke-width="2.4"/><path d="M15.5 1 L20.5 6.5 H10.5 Z M15.5 31 L20.5 25.5 H10.5 Z M1 16 L6.5 11 V21 Z M30.5 16 L25 11 V21 Z" fill="#333"/></svg>
<svg class="a" style="left:16px;top:150px" width="32" height="32" viewBox="0 0 32 32"><rect x="1.5" y="1.5" width="23" height="22" fill="none" stroke="#333" stroke-dasharray="2 2" stroke-width="1"/><circle cx="18" cy="17" r="7.5" fill="#f0f0f0" stroke="#333" stroke-width="2"/><path d="M23.5 22.5 L29.5 28.5" stroke="#333" stroke-width="2.6"/></svg>
<div class="sep" style="left:4px;top:189px;width:55px"></div>
<svg class="a" style="left:16px;top:199px" width="32" height="30" viewBox="0 0 32 30"><rect x="1" y="1" width="30" height="28" fill="none" stroke="#333" stroke-width="2"/><path d="M6 6 L11 11 M6 6 H10.5 M6 6 V10.5 M26 6 L21 11 M26 6 H21.5 M26 6 V10.5 M6 24 L11 19 M6 24 H10.5 M6 24 V19.5 M26 24 L21 19 M26 24 H21.5 M26 24 V19.5" stroke="#333" stroke-width="2"/></svg>
<div class="sel" style="left:4px;top:599px;width:55px;height:42px"></div>
<svg class="a" style="left:17px;top:606px" width="31" height="30" viewBox="0 0 31 30"><rect x="0.5" y="0.5" width="30" height="29" fill="#fff" stroke="#333"/><rect x="1" y="1" width="29" height="4" fill="#7ab8ec"/><path d="M0.5 5.5 H30.5 M0.5 9.5 H30.5 M0.5 13.5 H30.5 M0.5 17.5 H30.5 M0.5 21.5 H30.5 M0.5 25.5 H30.5 M5.5 0.5 V29.5 M14.5 0.5 V29.5 M25.5 0.5 V29.5" stroke="#333" stroke-width="1"/></svg>
<div class="btn" style="left:4px;top:644px;width:55px;height:42px;background:#e0e0e0"></div>
<svg class="a" style="left:16px;top:650px" width="32" height="30" viewBox="0 0 32 30"><circle cx="7.8" cy="7.8" r="6.6" fill="#7ab8ec" stroke="#1a70c8" stroke-width="1"/><text x="16.5" y="13.6" font-family="Liberation Sans" font-size="11.5" fill="#333">Ab</text><path d="M3 18.4 H13 M3 22.6 H13 M3 26.7 H13" stroke="#222" stroke-width="1.6"/><rect x="17.75" y="18.75" width="12.5" height="9.5" fill="#fadc90" stroke="#e07010" stroke-width="1.5"/></svg>
<div class="btn" style="left:4px;top:689px;width:55px;height:42px;background:#e0e0e0"></div>
<svg class="a" style="left:16px;top:694px" width="32" height="32" viewBox="0 0 32 32"><path d="M13.51 6.01 L13.39 1.94 L18.61 1.94 L18.49 6.01 L21.30 7.17 L24.10 4.21 L27.79 7.90 L24.83 10.70 L25.99 13.51 L30.06 13.39 L30.06 18.61 L25.99 18.49 L24.83 21.30 L27.79 24.10 L24.10 27.79 L21.30 24.83 L18.49 25.99 L18.61 30.06 L13.39 30.06 L13.51 25.99 L10.70 24.83 L7.90 27.79 L4.21 24.10 L7.17 21.30 L6.01 18.49 L1.94 18.61 L1.94 13.39 L6.01 13.51 L7.17 10.70 L4.21 7.90 L7.90 4.21 L10.70 7.17 Z" fill="#c9c45c" stroke="#333" stroke-width="1.3" stroke-linejoin="round"/><circle cx="16" cy="16" r="5.2" fill="#e2e2e2" stroke="#333" stroke-width="1.3"/></svg>

<!-- BOTTOM PANEL -->
<div class="tab" style="left:3px;top:742px;width:20px;height:261px"></div>
<div class="a" style="left:15px;top:750px;width:2px;height:6px;background:#111"></div>
<div class="vt" style="left:7px;top:998px">Poruchy</div>
<div class="t" style="left:33px;top:756px;font-weight:bold">Výpočet :</div>
<div class="btn" style="left:90px;top:753px;width:23px;height:26px"></div>
<svg class="a" style="left:95px;top:759px" width="14" height="14" viewBox="0 0 14 14"><rect x="0.5" y="0.5" width="13" height="13" fill="none" stroke="#00a000"/><path d="M7 3 V11 M3 7 H11" stroke="#008000" stroke-width="2.2"/></svg>
<div class="btn" style="left:118px;top:753px;width:23px;height:26px"></div>
<svg class="a" style="left:123px;top:759px" width="14" height="14" viewBox="0 0 14 14"><rect x="0.5" y="0.5" width="13" height="13" fill="none" stroke="#e01010"/><path d="M3 7 H11" stroke="#d00000" stroke-width="2.2"/></svg>
<div class="sel" style="left:146px;top:753px;width:26px;height:26px"></div>
<div class="t" style="left:152px;top:761px">[1]</div>
<div class="t" style="left:178px;top:761px">[2]</div>
<div class="t" style="left:204px;top:761px">[3]</div>
<div class="t" style="left:230px;top:761px">[4]</div>
<div class="sep" style="left:33px;top:788px;width:1739px"></div>
<!-- group typ -->
<div class="grp" style="left:33px;top:805px;width:251px;height:47px"></div>
<div class="t" style="left:44px;top:825px">Typ poruchy :</div>
<div class="a" style="left:121px;top:821px;width:152px;height:20px;background:#fff;border:1px solid #a0a0a0"></div>
<div class="t" style="left:124px;top:825px">tahové poškození</div>
<svg class="a" style="left:260px;top:829px" width="8" height="5"><path d="M0 0 H8 L4 5 Z" fill="#000"/></svg>
<div class="grp" style="left:33px;top:862px;width:251px;height:47px"></div>
<div class="t" style="left:44px;top:882px">Sestavit :</div>
<div class="a" style="left:121px;top:879px;width:152px;height:19px;background:#fff;border:1px solid #a0a0a0"></div>
<div class="t" style="left:124px;top:882px">obálky ze všech fází</div>
<svg class="a" style="left:260px;top:886px" width="8" height="5"><path d="M0 0 H8 L4 5 Z" fill="#000"/></svg>
<!-- group budova -->
<div class="grp" style="left:289px;top:805px;width:183px;height:104px"></div>
<div class="t" style="left:300px;top:825px;color:#a0a0a0">Budova :</div>
<div class="a" style="left:351px;top:821px;width:110px;height:20px;background:#f0f0f0;border:1px solid #c0c0c0"></div>
<div class="t" style="left:354px;top:825px;color:#a0a0a0">Budova 1</div>
<svg class="a" style="left:447px;top:829px" width="8" height="5"><path d="M0 0 H8 L4 5 Z" fill="#909090"/></svg>
<div class="t" style="left:300px;top:851px;color:#a0a0a0">Pořad.</div>
<div class="t" style="left:351px;top:853px;color:#a0a0a0">x<sub style="font-size:9px;vertical-align:-3px">1</sub> =</div>
<div class="a" style="left:377px;top:847px;width:60px;height:20px;border:1px solid #c0c0c0"></div>
<div class="t" style="left:443px;top:851px;color:#a0a0a0">[m]</div>
<div class="t" style="left:300px;top:877px;color:#a0a0a0">Pořad.</div>
<div class="t" style="left:351px;top:879px;color:#a0a0a0">x<sub style="font-size:9px;vertical-align:-3px">2</sub> =</div>
<div class="a" style="left:377px;top:873px;width:60px;height:20px;border:1px solid #c0c0c0"></div>
<div class="t" style="left:443px;top:877px;color:#a0a0a0">[m]</div>
<!-- group vyber fazi -->
<div class="a" style="left:33px;top:919px;width:439px;height:74px;border:1px solid #a0a0a0;border-bottom:none"></div>
<div class="t" style="left:45px;top:914px;background:#f0f0f0;padding:0 2px;letter-spacing:-0.2px">Výběr fází</div>
<div class="a" style="left:49px;top:935px;width:40px;height:32px;background:#cccccc;border:1px solid #bcbcbc"></div>
<div class="t" style="left:61px;top:945px;color:#999;font-weight:bold">[1]</div>
<div class="a" style="left:345px;top:935px;width:88px;height:26px;background:#cccccc;border:1px solid #bcbcbc"></div>
<svg class="a" style="left:348px;top:938px" width="19" height="19" viewBox="0 0 19 19"><g fill="#f4f4f4" stroke="#a8a8a8"><rect x="0.5" y="0.5" width="8" height="8"/><rect x="10.5" y="0.5" width="8" height="8"/><rect x="0.5" y="10.5" width="8" height="8"/><rect x="10.5" y="10.5" width="8" height="8"/></g><g fill="#fff"><rect x="1" y="1" width="7" height="7" opacity=".4"/></g></svg>
<div class="t" style="left:371px;top:942px;color:#9a9a9a">Vyber vše</div>
<div class="a" style="left:345px;top:967px;width:88px;height:26px;background:#cccccc;border:1px solid #bcbcbc"></div>
<svg class="a" style="left:348px;top:970px" width="19" height="19" viewBox="0 0 19 19"><g fill="#f4f4f4" stroke="#a8a8a8"><rect x="0.5" y="0.5" width="8" height="8"/><rect x="10.5" y="0.5" width="8" height="8"/><rect x="0.5" y="10.5" width="8" height="8"/><rect x="10.5" y="10.5" width="8" height="8"/></g></svg>
<div class="t" style="left:371px;top:974px;color:#9a9a9a">Zruš výběr</div>
<!-- results -->
<div class="a" style="left:477px;top:805px;width:547px;height:188px;border:1px solid #a0a0a0;border-bottom:none"></div>
<div class="t" style="left:489px;top:801px;background:#f0f0f0;padding:0 2px;letter-spacing:-0.2px">Výsledky</div>
<div class="a" style="left:488px;top:821px;width:525px;height:172px;background:#fff;border:1px solid #a0a0a0;overflow:hidden">
</div>
<!-- TABLE SVG -->
<svg class="a" style="left:489px;top:822px" width="505" height="169" viewBox="489 822 505 169">
<g font-family="Liberation Sans" font-size="12" fill="#000">
<text x="498.5" y="840">Typ poruchy: tahové poškození</text>
<text x="498.5" y="856">Popis budovy: Budova 1</text>
</g>
<g shape-rendering="crispEdges">
<rect x="498" y="859" width="489" height="39" fill="#000"/><rect x="499" y="860" width="487" height="37" fill="#f7f7f7"/>
<rect x="498" y="898" width="1" height="100" fill="#000"/><rect x="986" y="898" width="1" height="100" fill="#000"/>
<rect x="499" y="898" width="44" height="100" fill="#fafafa"/>
<rect x="543" y="860" width="1" height="37" fill="#d4d4d4"/><rect x="543" y="898" width="1" height="100" fill="#d4d4d4"/>
<rect x="626" y="860" width="1" height="37" fill="#d4d4d4"/><rect x="626" y="898" width="1" height="100" fill="#d4d4d4"/>
<rect x="709" y="860" width="1" height="37" fill="#d4d4d4"/><rect x="709" y="898" width="1" height="100" fill="#d4d4d4"/>
<rect x="499" y="915" width="487" height="1" fill="#d4d4d4"/>
<rect x="499" y="933" width="487" height="1" fill="#d4d4d4"/>
<rect x="499" y="951" width="487" height="1" fill="#d4d4d4"/>
<rect x="499" y="969" width="487" height="1" fill="#d4d4d4"/>
<rect x="499" y="987" width="487" height="1" fill="#d4d4d4"/>
<rect x="499" y="1005" width="487" height="1" fill="#d4d4d4"/>
</g>
<g font-family="Liberation Sans" font-size="12" fill="#000">
<text x="521" y="883" text-anchor="middle">Úsek</text>
<text x="585" y="872" text-anchor="middle">Zač.</text>
<text x="585" y="891" text-anchor="middle">x<tspan font-size="9" dy="2">1</tspan><tspan dy="-2"> [m]</tspan></text>
<text x="668" y="872" text-anchor="middle">Kon.</text>
<text x="668" y="891" text-anchor="middle">x<tspan font-size="9" dy="2">2</tspan><tspan dy="-2"> [m]</tspan></text>
<text x="847.5" y="883" text-anchor="middle">Popis porušení</text>
<text x="520.5" y="911" text-anchor="middle">1</text><text x="623" y="911" text-anchor="end">90,00</text><text x="706" y="911" text-anchor="end">90,60</text><text x="712" y="911">V. HS&lt;1,80, střední poškození</text>
<text x="520.5" y="929" text-anchor="middle">2</text><text x="623" y="929" text-anchor="end">90,60</text><text x="706" y="929" text-anchor="end">91,20</text><text x="712" y="929">IV. HS&lt;1,00, malé poškození</text>
<text x="520.5" y="947" text-anchor="middle">3</text><text x="623" y="947" text-anchor="end">91,20</text><text x="706" y="947" text-anchor="end">91,65</text><text x="712" y="947">III. HS&lt;0,75, velmi malé poškození</text>
<text x="520.5" y="965" text-anchor="middle">4</text><text x="623" y="965" text-anchor="end">91,65</text><text x="706" y="965" text-anchor="end">92,55</text><text x="712" y="965">II. HS&lt;0,50, mikrotrhliny</text>
<text x="520.5" y="983" text-anchor="middle">5</text><text x="623" y="983" text-anchor="end">92,55</text><text x="706" y="983" text-anchor="end">107,55</text><text x="712" y="983">I. tlačená oblast - bez poškození</text>
<text x="520.5" y="1001" text-anchor="middle">6</text><text x="623" y="1001" text-anchor="end">107,55</text><text x="706" y="1001" text-anchor="end">108,45</text><text x="712" y="1001">II. HS&lt;0,50, mikrotrhliny</text>
</g>
</svg>
<!-- results scrollbar -->
<div class="a" style="left:994px;top:822px;width:18px;height:170px;background:#f0f0f0"></div>
<svg class="a" style="left:998px;top:829px" width="9" height="5"><path d="M0 5 H9 L4.5 0 Z" fill="#606060"/></svg>
<div class="a" style="left:997px;top:840px;width:11px;height:82px;background:#cdcdcd"></div>
<svg class="a" style="left:998px;top:979px" width="9" height="5"><path d="M0 0 H9 L4.5 5 Z" fill="#606060"/></svg>
<!-- big scrollbar -->
<div class="a" style="left:1755px;top:798px;width:17px;height:17px;border:1px solid #c8c8c8;background:#f0f0f0"></div>
<svg class="a" style="left:1759px;top:804px" width="9" height="5"><path d="M0 5 H9 L4.5 0 Z" fill="#606060"/></svg>
<div class="a" style="left:1755px;top:814px;width:17px;height:153px;background:#cdcdcd"></div>
<div class="a" style="left:1755px;top:976px;width:17px;height:17px;border:1px solid #c8c8c8;background:#f0f0f0"></div>
<svg class="a" style="left:1759px;top:982px" width="9" height="5"><path d="M0 0 H9 L4.5 5 Z" fill="#606060"/></svg>

<!-- RIGHT PANEL -->
<div class="hdr" style="left:1789px;top:101px;width:128px;height:20px"></div>
<div class="t" style="left:1793px;top:105px">Režimy</div>
<div class="a" style="left:1903px;top:113px;width:6px;height:2px;background:#000"></div>
<svg class="a" style="left:1797px;top:128px" width="16" height="17" viewBox="0 0 16 17"><rect x="1" y="1" width="14" height="15" fill="#fff" stroke="#333" stroke-width="1.3"/><path d="M4 4.5 H12 M4 6.5 H12 M4 8.5 H12 M4 10.5 H12 M4 12.5 H12" stroke="#444" stroke-width=".9"/></svg>
<div class="t" style="left:1816px;top:130px">Projekt</div>
<svg class="a" style="left:1797px;top:150px" width="16" height="16" viewBox="0 0 16 16"><path d="M6.5 0.5 H9.5 L10 2.8 L12 3.9 L14.1 3 L15.6 5.6 L13.9 7 V9 L15.6 10.4 L14.1 13 L12 12.1 L10 13.2 L9.5 15.5 H6.5 L6 13.2 L4 12.1 L1.9 13 L0.4 10.4 L2.1 9 V7 L0.4 5.6 L1.9 3 L4 3.9 L6 2.8 Z" fill="#333"/><circle cx="8" cy="8" r="2.7" fill="#f0f0f0"/></svg>
<div class="t" style="left:1816px;top:152px">Nastavení</div>
<div class="sep" style="left:1793px;top:172px;width:120px"></div>

<svg class="a" style="left:1794px;top:175px;z-index:2" width="22" height="150" viewBox="1794 175 22 150">
<rect x="1799.5" y="181.5" width="4" height="10" fill="#ff00ff" stroke="#222" stroke-width=".6"/><rect x="1806.5" y="187.5" width="4" height="4" fill="#ff00ff" stroke="#222" stroke-width=".6"/><path d="M1798 191.5 H1812" stroke="#222" stroke-width="1"/>
<path d="M1798 204.5 H1812" stroke="#222" stroke-width="1"/><circle cx="1804.5" cy="211.5" r="3" fill="#ff00ff" stroke="#700070" stroke-width=".5"/>
<path d="M1798 226.5 H1812" stroke="#222" stroke-width="1"/><path d="M1798 232 Q1801 235.5 1805 235.5 Q1809 235.5 1812 231" fill="none" stroke="#ff00ff" stroke-width="2.2"/>
<rect x="1797.5" y="257.5" width="8.5" height="10" fill="#f8c850" stroke="#333" stroke-width="1"/><text x="1799" y="266.5" font-family="Liberation Sans" font-size="9" fill="#333">1</text>
<rect x="1804.5" y="252.5" width="8.5" height="10" fill="#f8c850" stroke="#333" stroke-width="1"/><text x="1806" y="261.5" font-family="Liberation Sans" font-size="9" fill="#333">2</text>
<path d="M1798 285.5 H1812" stroke="#222" stroke-width="1"/><path d="M1798 290 Q1805 299 1812 290" fill="none" stroke="#d00000" stroke-width="2.4"/><circle cx="1804.5" cy="289.5" r="1.6" fill="#d8a040" stroke="#333" stroke-width=".6"/>
<rect x="1802.5" y="306.5" width="4" height="4" fill="#d00000" stroke="#333" stroke-width=".5"/><rect x="1806.5" y="303.5" width="4" height="7" fill="#d00000" stroke="#333" stroke-width=".5"/><path d="M1798 310.5 H1812" stroke="#222" stroke-width="1"/><path d="M1798 314.5 Q1805 320 1812 314.5" fill="none" stroke="#808080" stroke-width="2.2"/>
</svg>
<div class="t" style="left:1816px;top:181px">Budovy</div>

<div class="t" style="left:1816px;top:203px">Geometrie</div>

<div class="t" style="left:1816px;top:225px">Měření</div>
<div class="sep" style="left:1793px;top:245px;width:120px"></div>

<div class="t" style="left:1816px;top:254px">Nastavení fáze</div>
<div class="sep" style="left:1793px;top:274px;width:120px"></div>

<div class="t" style="left:1816px;top:283px">Výpočet</div>
<div class="sel" style="left:1793px;top:300px;width:120px;height:22px"></div>

<div class="t" style="left:1816px;top:305px">Poruchy</div>

<div class="hdr" style="left:1789px;top:777px;width:128px;height:20px"></div>
<div class="t" style="left:1793px;top:781px">Výstupy</div>
<div class="a" style="left:1903px;top:789px;width:6px;height:2px;background:#000"></div>
<div class="btn" style="left:1793px;top:801px;width:120px;height:22px"></div>
<svg class="a" style="left:1797px;top:804px" width="16" height="16" viewBox="0 0 16 16"><rect x="0.5" y="0.5" width="15" height="15" rx="1" fill="#fff" stroke="#666"/><rect x="3.5" y="3.5" width="2.5" height="3" fill="none" stroke="#333" stroke-width="1"/><rect x="3.5" y="6.5" width="3.5" height="3" fill="none" stroke="#333" stroke-width="1"/><rect x="3.5" y="9.5" width="5.5" height="3" fill="none" stroke="#333" stroke-width="1"/><path d="M11 2 V8 M8 5 H14" stroke="#009000" stroke-width="1.8"/></svg>
<div class="t" style="left:1816px;top:806px">Přidat obrázek</div>
<div class="t" style="left:1793px;top:829px">Poruchy :</div>
<div class="t" style="left:1906px;top:829px">0</div>
<div class="t" style="left:1793px;top:850px">Celkem :</div>
<div class="t" style="left:1906px;top:850px">0</div>
<div class="btn" style="left:1793px;top:868px;width:120px;height:22px"></div>
<svg class="a" style="left:1797px;top:871px" width="16" height="16" viewBox="0 0 16 16"><rect x="0.5" y="0.5" width="15" height="15" rx="1" fill="#fff" stroke="#666"/><rect x="3.5" y="3.5" width="2.5" height="3" fill="none" stroke="#333" stroke-width="1"/><rect x="3.5" y="6.5" width="3.5" height="3" fill="none" stroke="#333" stroke-width="1"/><rect x="3.5" y="9.5" width="5.5" height="3" fill="none" stroke="#333" stroke-width="1"/><path d="M8 3.5 H13.5 M8 5.5 H13.5 M10 7.5 H13.5" stroke="#333" stroke-width="1"/></svg>
<div class="t" style="left:1816px;top:873px">Seznam obrázků</div>
<div class="sep" style="left:1793px;top:896px;width:120px"></div>
<div class="btn" style="left:1793px;top:903px;width:120px;height:22px"></div>
<svg class="a" style="left:1798px;top:907px" width="14" height="13" viewBox="0 0 14 13"><rect x="0.5" y="0.5" width="13" height="12" fill="#fff" stroke="#333" stroke-width="1"/><path d="M2 2.5 H4 M5 2.5 H8.5 M9.5 2.5 H12 M2 4.5 H4 M5 4.5 H8.5 M9.5 4.5 H12 M2 6.5 H4 M5 6.5 H8.5 M9.5 6.5 H12 M2 8.5 H4 M5 8.5 H8.5 M9.5 8.5 H12 M2 10.5 H4 M5 10.5 H8.5 M9.5 10.5 H12" stroke="#333" stroke-width="1"/></svg>
<div class="t" style="left:1816px;top:908px">Správce dodatků</div>
<div class="btn" style="left:1793px;top:931px;width:58px;height:42px"></div>
<div class="btn" style="left:1856px;top:931px;width:57px;height:42px"></div>
<svg class="a" style="left:1809px;top:937px" width="26" height="31" viewBox="0 0 26 31"><rect x="3" y="4" width="20" height="5" fill="#8a7450" stroke="#111" stroke-width="1"/><rect x="5.5" y="1.5" width="15" height="6.5" fill="#fff" stroke="#111" stroke-width="1.2"/><rect x="1.5" y="7.5" width="23" height="12" rx="1.5" fill="#c9b48b" stroke="#111" stroke-width="1.3"/><rect x="3" y="9" width="1.5" height="1" fill="#333"/><rect x="21.5" y="9" width="1.5" height="1" fill="#333"/><rect x="3.5" y="12.5" width="19" height="3.5" fill="#2a2a2a"/><rect x="6" y="12.5" width="2" height="1" fill="#aaa"/><rect x="12" y="12.5" width="2" height="1" fill="#aaa"/><rect x="18" y="12.5" width="2" height="1" fill="#aaa"/><rect x="4.5" y="16.5" width="16.5" height="13" rx="1" fill="#fff" stroke="#111" stroke-width="1.3"/><path d="M7 19.5 H18.5 M7 22 H18.5 M7 24.5 H18.5" stroke="#111" stroke-width="1"/><path d="M9 27 H11 M12.5 27 H14.5 M16 27 H18" stroke="#111" stroke-width="1"/><rect x="7" y="21" width="1.5" height="2" fill="#111"/></svg>
<svg class="a" style="left:1872px;top:937px" width="26" height="31" viewBox="0 0 26 31"><rect x="3" y="4" width="20" height="5" fill="#8a7450" stroke="#111" stroke-width="1"/><rect x="5.5" y="1.5" width="15" height="6.5" fill="#fff" stroke="#111" stroke-width="1.2"/><rect x="1.5" y="7.5" width="23" height="12" rx="1.5" fill="#c9b48b" stroke="#111" stroke-width="1.3"/><rect x="3" y="9" width="1.5" height="1" fill="#333"/><rect x="21.5" y="9" width="1.5" height="1" fill="#333"/><rect x="3.5" y="12.5" width="19" height="3.5" fill="#2a2a2a"/><rect x="6" y="12.5" width="2" height="1" fill="#aaa"/><rect x="12" y="12.5" width="2" height="1" fill="#aaa"/><rect x="18" y="12.5" width="2" height="1" fill="#aaa"/><rect x="4.5" y="16.5" width="16.5" height="13" rx="1" fill="#fff" stroke="#111" stroke-width="1.3"/><path d="M8.5 19.5 H7 V27.5 H8.5" fill="none" stroke="#e00000" stroke-width="1.2"/><path d="M10 19.5 H18.5 L17.5 21.5 H11.5 M12 22 H18 L17 24 H13 M13.5 24.5 H17.5 L16.5 26.5 H14.5" fill="none" stroke="#e00000" stroke-width="1"/></svg>
<div class="btn" style="left:1793px;top:976px;width:120px;height:22px"></div>
<svg class="a" style="left:1797px;top:979px" width="16" height="17" viewBox="0 0 16 17"><rect x="0.5" y="0.5" width="8" height="10" rx="1" fill="#fff" stroke="#555"/><rect x="3" y="3" width="1.8" height="2" fill="none" stroke="#333" stroke-width=".8"/><rect x="3" y="5" width="2.6" height="2" fill="none" stroke="#333" stroke-width=".8"/><rect x="3" y="7" width="3.5" height="2" fill="none" stroke="#333" stroke-width=".8"/><path d="M10 5 H12 V9 M10.5 8 L12 9.5 L13.5 8" stroke="#00a000" fill="none" stroke-width="1.2"/><rect x="9.5" y="10.5" width="6" height="5" rx=".8" fill="#fff" stroke="#333"/><path d="M10 12.5 H15 M12 12.5 V13.5 M13 12.5 V13.5" stroke="#333" stroke-width=".8"/></svg>
<div class="t" style="left:1816px;top:981px">Kopírovat pohled</div>
<svg class="a" style="left:1908px;top:1020px" width="10" height="10"><g fill="#b0b0b0"><rect x="7" y="1" width="2" height="2"/><rect x="4" y="4" width="2" height="2"/><rect x="7" y="4" width="2" height="2"/><rect x="1" y="7" width="2" height="2"/><rect x="4" y="7" width="2" height="2"/><rect x="7" y="7" width="2" height="2"/></g></svg>
</body></html>
